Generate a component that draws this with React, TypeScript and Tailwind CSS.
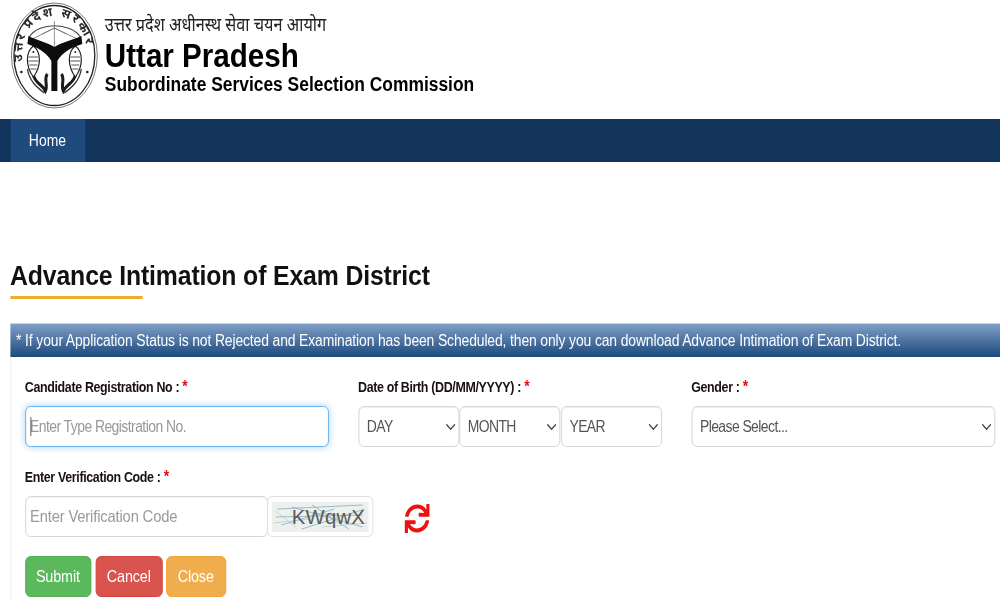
import { FaSync } from "react-icons/fa";
import { ChevronDown } from "lucide-react";

const F = "[font-family:'Liberation_Sans',Arial,sans-serif]";

function Logo() {
  return (
    <svg width="101" height="110" viewBox="0 0 88 110" preserveAspectRatio="none" className="shrink-0">
      <ellipse cx="44" cy="54.5" rx="43" ry="52.5" fill="#fff" stroke="#555" strokeWidth="0.8" />
      <ellipse cx="44" cy="54.5" rx="40.5" ry="50" fill="none" stroke="#222" strokeWidth="1.3" />
      <defs>
        <path id="logoarc" d="M13 66 C 7 32, 24 15, 44 15 C 64 15, 81 32, 75 66" />
      </defs>
      <text fontSize="12.5" fill="#2a2a2a" fontFamily="'Noto Sans','Liberation Sans',sans-serif" fontWeight="700">
        <textPath href="#logoarc" startOffset="4%" textLength="110">उत्तर प्रदेश सरकार</textPath>
      </text>
      {/* bow and arrow */}
      <path d="M19 36 C 28 21, 60 21, 70 36" fill="none" stroke="#444" strokeWidth="1.2" />
      <path d="M22 38 L44 27 L67 38" fill="none" stroke="#666" strokeWidth="0.8" />
      <path d="M44 20 V46 M32 33 L44 27 M56 33 L44 27" fill="none" stroke="#666" strokeWidth="0.7" />
      {/* fish tails, waves */}
      <path d="M17 68 C 19 80, 26 86, 34 92 M71 68 C 69 80, 62 86, 54 92" fill="none" stroke="#333" strokeWidth="1.3" />
      <path d="M23 74 C 25 83, 31 82, 35 90 C 38 84, 33 78, 37 73 M65 74 C 63 83, 57 82, 53 90 C 50 84, 55 78, 51 73" fill="none" stroke="#1b1b1b" strokeWidth="3" />
      {/* fishes */}
      <path d="M23 45 C 15 51, 15 65, 23 76 C 31 65, 31 51, 23 45 Z" fill="#fff" stroke="#222" strokeWidth="1.2" />
      <path d="M65 45 C 57 51, 57 65, 65 76 C 73 65, 73 51, 65 45 Z" fill="#fff" stroke="#222" strokeWidth="1.2" />
      <path d="M18 56 H28 M18 60 H28 M19 64 H27 M20 68 H26 M60 56 H70 M60 60 H70 M61 64 H69 M62 68 H68" stroke="#444" strokeWidth="0.9" />
      <circle cx="23" cy="51" r="1" fill="#222" />
      <circle cx="65" cy="51" r="1" fill="#222" />
      {/* tail shape */}
      <path
        d="M18 35 C 26 39, 36 41, 44 46 C 52 41, 62 39, 71 35 L72 43 C 62 46, 52 51, 47 60 L47 90 L41 90 L41 60 C 36 51, 26 46, 17 43 Z"
        fill="#0d0d0d"
      />
      <circle cx="11" cy="71" r="1.3" fill="#222" />
      <circle cx="77" cy="71" r="1.3" fill="#222" />
    </svg>
  );
}

function Captcha() {
  return (
    <div className="w-[122px] h-[41px] -ml-px rounded-md border border-[#dddddd] bg-white flex items-center justify-center shrink-0">
      <svg width="112" height="32" viewBox="0 0 96 32" preserveAspectRatio="none">
        <rect x="0" y="1" width="96" height="30" fill="#eef0ee" />
        <path d="M6 8 L90 4 M10 24 L62 8 M20 6 L90 26 M4 16 L90 14 M30 28 L92 8 M40 4 L76 28" stroke="#7fb0c8" strokeWidth="0.8" fill="none" />
        <path d="M2 22 L40 18 M4 10 L24 26 M50 26 L94 22" stroke="#b8c4c8" strokeWidth="0.7" fill="none" />
        <text x="20" y="23" fontSize="20" fill="#5d5a52" textLength="72" fontFamily="'Liberation Sans',sans-serif">KWqwX</text>
      </svg>
    </div>
  );
}

function Label({ text }: { text: string }) {
  return (
    <label className="block h-[18px] text-[14.3px] leading-[18px] font-bold text-[#1a1010] whitespace-nowrap tracking-[-0.4px]">
      {text} <span className="text-[#e01010] text-[16px]">*</span>
    </label>
  );
}

function SelectBox({ text, className }: { text: string; className: string }) {
  return (
    <div className={`relative h-[41px] ${className}`}>
      <select className="appearance-none w-full h-full rounded-md border border-[#d4d4d4] bg-white pl-[9px] text-[16px] tracking-[-0.65px] text-[#555] shadow-[inset_0_1px_1px_rgba(0,0,0,0.07)]">
        <option>{text}</option>
      </select>
      <ChevronDown size={18} strokeWidth={2} className="absolute right-[1px] top-[12px] text-[#444] pointer-events-none" />
    </div>
  );
}

export default function App() {
  return (
    <div className="w-[1000px] h-[600px] overflow-hidden bg-white">
      <div className={`${F} w-[1150px] h-[600px] origin-left scale-x-[0.87] flex flex-col`}>
        <header className="h-[119px] shrink-0 flex items-start pl-[11.5px] pt-px">
          <Logo />
          <div className="ml-[8px] flex flex-col pt-[11px] text-black">
            <div className="h-[24px] text-[18.7px] leading-[24px] font-['Noto_Sans',sans-serif] text-[#222] whitespace-nowrap">
              उत्तर प्रदेश अधीनस्थ सेवा चयन आयोग
            </div>
            <div className="h-[36px] text-[34px] leading-[38px] font-bold whitespace-nowrap">Uttar Pradesh</div>
            <div className="text-[20px] leading-[24px] font-bold whitespace-nowrap">
              Subordinate Services Selection Commission
            </div>
          </div>
        </header>

        <nav className="h-[43px] shrink-0 bg-[#12335a] pl-[11.5px] flex">
          <a className="w-[86px] h-full bg-[#1f4a7c] text-white text-[16px] flex items-center justify-center">
            Home
          </a>
        </nav>

        <main className="pl-[11.5px] flex-1 min-h-0">
          <h1 className="mt-[93px] h-[41px] text-[28.5px] leading-[40px] font-bold text-[#111] whitespace-nowrap tracking-[-0.15px]">
            Advance Intimation of Exam District
          </h1>
          <div className="w-[152px] h-[3px] bg-[#efad2d]" />

          <section className="mt-[24px] border-l border-[#e8e8e8] h-[300px]">
            <div className="h-[34px] -ml-px flex items-center pl-[7px] bg-gradient-to-b from-[#7f9fc6] to-[#1b4a7d] border-t border-[#c9d4e0] text-white text-[16px] whitespace-nowrap tracking-[-0.15px]">
              * If your Application Status is not Rejected and Examination has been Scheduled, then only you can download Advance Intimation of Exam District.
            </div>

            <div className="pl-[16px] pt-[21px]">
              <div className="flex">
                <div className="w-[383px]">
                  <Label text="Candidate Registration No :" />
                  <div className="relative mt-[10px] w-[349px]">
                    <input
                      readOnly
                      placeholder="Enter Type Registration No."
                      className="w-full h-[41px] rounded-md border border-[#66afe9] bg-white pl-[5px] text-[16px] tracking-[-0.63px] placeholder:text-[#999] shadow-[0_0_8px_rgba(102,175,233,0.6)] outline-none"
                    />
                    <span className="absolute left-[6px] top-[11px] w-px h-[19px] bg-[#444]" />
                  </div>
                </div>
                <div className="w-[383px]">
                  <Label text="Date of Birth (DD/MM/YYYY) :" />
                  <div className="mt-[10px] flex h-[41px] items-start">
                    <SelectBox text="DAY" className="w-[116px]" />
                    <SelectBox text="MONTH" className="w-[116px]" />
                    <SelectBox text="YEAR" className="w-[116px] ml-px" />
                  </div>
                </div>
                <div className="w-[350px]">
                  <Label text="Gender :" />
                  <SelectBox text="Please Select..." className="mt-[10px] w-[349px]" />
                </div>
              </div>

              <div className="mt-[21px]">
                <Label text="Enter Verification Code :" />
                <div className="mt-[10px] flex items-center h-[41px]">
                  <input
                    readOnly
                    placeholder="Enter Verification Code"
                    className="w-[279px] h-[41px] rounded-md border border-[#d4d4d4] bg-white pl-[5px] text-[17px] tracking-[-0.2px] placeholder:text-[#999] outline-none shadow-[inset_0_1px_1px_rgba(0,0,0,0.05)]"
                  />
                  <Captcha />
                  <FaSync className="ml-[36px] mt-[4px] text-[#ee1111] w-[29px] h-[29px]" />
                </div>
              </div>

              <div className="mt-[19px] flex">
                <button className="w-[76px] h-[41px] rounded-md bg-[#5cb85c] border border-[#4cae4c] text-white text-[16.5px] tracking-[-0.15px]">Submit</button>
                <button className="ml-[5px] w-[77px] h-[41px] rounded-md bg-[#d9534f] border border-[#d43f3a] text-white text-[16.5px] tracking-[-0.15px]">Cancel</button>
                <button className="ml-[4px] w-[69px] h-[41px] rounded-md bg-[#f0ad4e] border border-[#eea236] text-white text-[16.5px] tracking-[-0.15px]">Close</button>
              </div>
            </div>
          </section>
        </main>
      </div>
    </div>
  );
}
